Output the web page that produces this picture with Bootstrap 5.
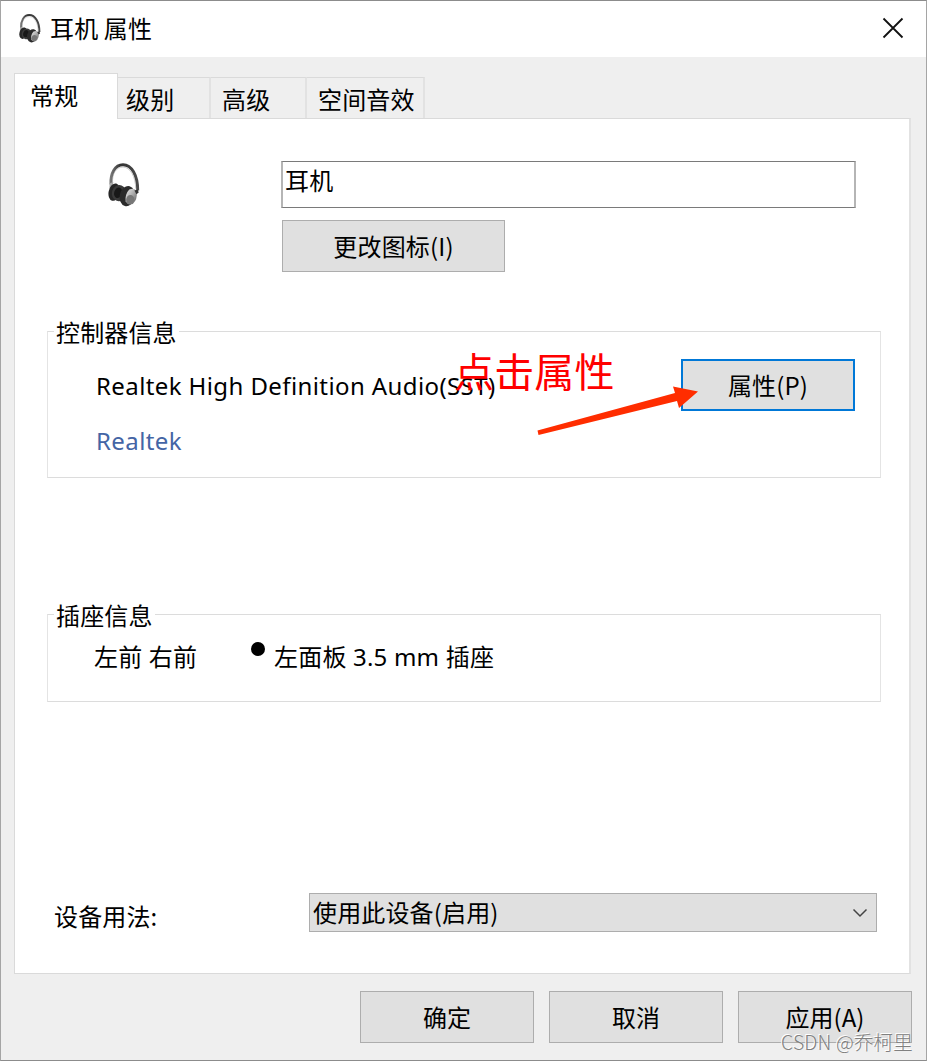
<!DOCTYPE html>
<html lang="zh-CN">
<head>
<meta charset="utf-8">
<title>耳机 属性</title>
<link href="https://cdn.jsdelivr.net/npm/bootstrap@5.3.0/dist/css/bootstrap.min.css" rel="stylesheet">
<style>
body{font-family:"Noto Sans","Noto Sans CJK SC",sans-serif;font-size:24px;line-height:32px;color:#000;background:#fff;overflow:hidden}
.cjk{font-family:"Noto Sans CJK SC",sans-serif;font-weight:400;letter-spacing:.15px}
.dialog{width:927px;height:1061px;background:#efefef;border:1px solid #a5a5a5;border-top-color:#8c8c8c;border-bottom-color:#8c8c8c}
.titlebar{height:56px;padding:0 22px 2px 18px}
.tabs{height:46px;margin:16px 0 0 13px}
.tab{height:42px;border:1px solid #dadada;border-left:0;border-bottom:0;border-right:2px solid #e2e2e2;padding:5px 0 0 8px;white-space:nowrap}
.tab-on{height:46px;width:104px;background:#fff;border:1px solid #dadada;border-bottom:0;padding:5px 0 0 15px;position:relative;z-index:1}
.sheet{width:897px;height:856px;margin:-1px 0 0 13px;border:1px solid #dadada;border-right:2px solid #e2e2e2;background:#fff;padding:42px 28px 0 32px}
.namebox{width:575px;height:47px;border:1px solid #7a7a7a;border-left:2px solid #b5b5b5;border-right:2px solid #b5b5b5;padding:2px 2px}
.wbtn{--bs-btn-font-size:24px;--bs-btn-line-height:32px;--bs-btn-border-radius:0;--bs-btn-padding-x:0;--bs-btn-padding-y:0;--bs-btn-color:#000;--bs-btn-bg:#e0e0e0;--bs-btn-border-color:#adadad;width:174px;height:52px;padding-bottom:1px}
.wbtn-focus{--bs-btn-border-color:#0078d7;--bs-btn-border-width:2px}
.group{border:1px solid #dcdcdc;border-left-color:#e4e4e4;border-right-color:#e4e4e4;width:834px;position:relative}
.group>.cap{position:absolute;left:6px;top:-16px;background:#fff;padding:0 2px;line-height:32px}
.latin{letter-spacing:.4px}
.link-r{color:#4465a5}
.dot{width:14px;height:14px;background:#000;border-radius:50%}
.usage{width:568px;height:39px;border:1px solid #adadad;background:#e0e0e0;padding:0 8px 0 3px}
.note{position:absolute;left:454px;top:340px;font-size:40px;line-height:60px;color:#f00;z-index:3}
.arrow{position:absolute;left:530px;top:380px;z-index:2}
.credit{position:absolute;left:781px;top:1029px;font-size:19.5px;line-height:26px;color:#808080;text-shadow:-1px -1px 0 #fff;white-space:nowrap}
.credit.cjk{font-weight:300}
</style>
<script src="https://cdn.jsdelivr.net/npm/bootstrap@5.3.0/dist/js/bootstrap.bundle.min.js"></script>
</head>
<body>
<svg width="0" height="0" class="position-absolute">
<defs>
<linearGradient id="metal" x1="0" y1="0" x2="1" y2="1"><stop offset="0" stop-color="#eee"/><stop offset=".5" stop-color="#aaa"/><stop offset="1" stop-color="#555"/></linearGradient>
<linearGradient id="band" x1="0" y1="0" x2="1" y2="0"><stop offset="0" stop-color="#777"/><stop offset=".35" stop-color="#333"/><stop offset="1" stop-color="#4a4a4a"/></linearGradient>
<symbol id="phones" viewBox="52 38 98 130" preserveAspectRatio="none">
<path d="M61 101C59 69 73 43 98 43C124 43 143 74 143 119" fill="none" stroke="url(#band)" stroke-width="9"/>
<path d="M66 98C64 69 77 50 98 50C120 50 136 78 137 114" fill="none" stroke="#999" stroke-width="1.500"/>
<path d="M57 98L68 94L67 112L56 116Z" fill="#aaa"/>
<ellipse cx="71" cy="124" rx="17" ry="26" transform="rotate(14 71 124)" fill="#262626"/>
<ellipse cx="86" cy="127" rx="22" ry="24" transform="rotate(18 86 127)" fill="#3a3a3a"/>
<ellipse cx="83" cy="126" rx="12" ry="16" transform="rotate(18 83 126)" fill="#181818"/>
<ellipse cx="111" cy="136" rx="23" ry="30" transform="rotate(14 111 136)" fill="#2b2b2b"/>
<path d="M117 116Q136 110 140 123Q143 145 128 159Q113 164 106 152Q103 131 117 116Z" fill="url(#metal)"/>
<ellipse cx="120" cy="146" rx="12" ry="14" transform="rotate(22 120 146)" fill="#777"/>
<path d="M133 119l10-3 3 9-7 5z" fill="#333"/>
</symbol>
</defs>
</svg>
<div class="dialog d-flex flex-column position-relative">
  <header class="titlebar bg-white d-flex align-items-center flex-shrink-0">
    <svg width="22" height="29"><use href="#phones"/></svg>
    <span class="cjk" style="margin:-1px 0 0 9px">耳机 属性</span>
    <svg class="ms-auto" width="22" height="22" viewBox="0 0 22 22"><path d="M1.5 1.5l19 19M20.5 1.5l-19 19" stroke="#111" stroke-width="1.8" fill="none"/></svg>
  </header>
  <nav class="tabs cjk d-flex align-items-end flex-shrink-0">
    <div class="tab-on">常规</div>
    <div class="tab" style="width:93px">级别</div>
    <div class="tab" style="width:96px;padding-left:11px">高级</div>
    <div class="tab" style="width:118px;padding-left:11px">空间音效</div>
  </nav>
  <main class="sheet flex-shrink-0">
    <div class="d-flex">
      <svg class="flex-shrink-0" width="32" height="44" style="margin:2px 141px 0 61px"><use href="#phones"/></svg>
      <div>
        <div class="namebox cjk">耳机</div>
        <button class="btn wbtn cjk d-block" style="width:223px;margin:12px 0 0 1px">更改图标(I)</button>
      </div>
    </div>
    <section class="group" style="height:147px;margin-top:59px">
      <div class="cap cjk">控制器信息</div>
      <div class="d-flex justify-content-between" style="padding:27px 25px 0 48px">
        <div class="latin text-nowrap" style="padding-top:11px"><div>Realtek High Definition Audio(SST)</div><div class="link-r" style="margin-top:23px">Realtek</div></div>
        <button class="btn wbtn wbtn-focus cjk">属性(P)</button>
      </div>
    </section>
    <section class="group" style="height:88px;margin-top:136px">
      <div class="cap cjk">插座信息</div>
      <div class="d-flex" style="padding:27px 0 0 46px;letter-spacing:.2px">
        <div style="width:157px;margin-top:-1px">左前 右前</div>
        <div class="dot"></div>
        <div style="margin:-1px 0 0 9px">左面板 3.5 mm 插座</div>
      </div>
    </section>
    <div class="d-flex cjk" style="margin-top:191px;padding-left:7px">
      <div style="width:255px;padding-top:7px">设备用法:</div>
      <div class="usage d-flex justify-content-between"><span style="padding-top:2px">使用此设备(启用)</span>
        <svg width="16" height="37" viewBox="0 0 16 37"><path d="M1.5 15.5l6.5 6.5 6.500-6.500" stroke="#444" stroke-width="1.5" fill="none"/></svg></div>
    </div>
  </main>
  <footer class="cjk d-flex justify-content-end" style="gap:15px;padding:17px 14px 0 0">
    <button class="btn wbtn">确定</button>
    <button class="btn wbtn">取消</button>
    <button class="btn wbtn">应用(A)</button>
  </footer>
</div>
<div class="note cjk">点击属性</div>
<svg class="arrow" width="172" height="60" viewBox="530 380 172 60"><path d="M537.500 430.500L675 393L673 386.500L698 391.500L679 408L677 401L538.500 435Z" fill="#ff2d00"/></svg>
<div class="credit cjk">CSDN @乔柯里</div>
</body>
</html>
